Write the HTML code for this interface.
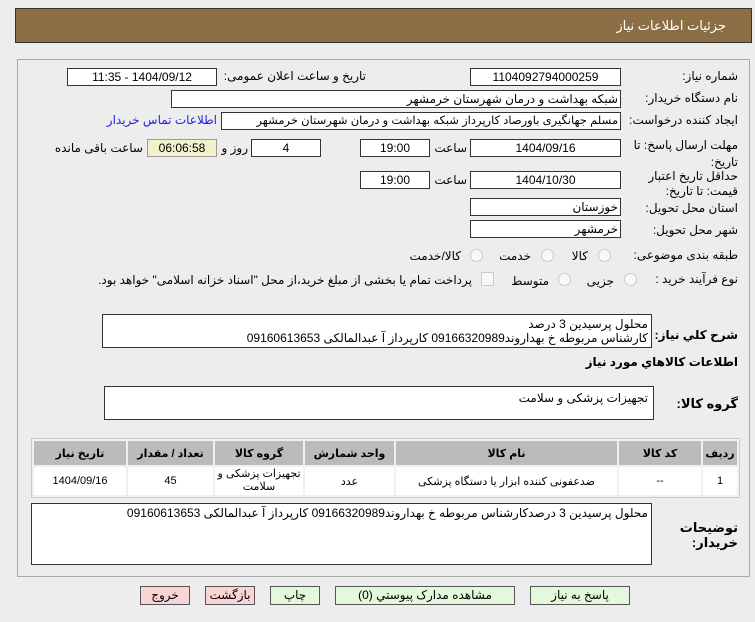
<!DOCTYPE html>
<html><head><meta charset="utf-8"><style>
body{margin:0;width:755px;height:622px;background:#ededed;font-family:"Liberation Sans","DejaVu Sans",sans-serif;font-size:12px;color:#000;position:relative;overflow:hidden;direction:rtl}
.a{position:absolute}
.hdr{left:15px;top:8px;width:737px;height:35px;background:#8b6e45;border:1px solid #333;box-sizing:border-box}
.hdr span{position:absolute;right:25px;top:9px;color:#fff;font-size:13px}
.panel{left:17px;top:59px;width:733px;height:518px;border:1px solid #aaa;box-sizing:border-box;background:#ededed}
.box{position:absolute;background:#fff;border:1px solid #333;box-sizing:border-box;height:18px;text-align:center;font-size:12px;line-height:16px;white-space:nowrap;overflow:hidden}
.l{position:absolute;white-space:nowrap;font-size:12px}
.r{text-align:right;padding-right:2px}
.rad{position:absolute;width:11px;height:11px;border:1px solid #ccc;border-radius:50%;background:#f8f8f8}
.btn{position:absolute;top:586px;height:19px;border:1px solid #555;box-sizing:border-box;text-align:center;font-size:12px;line-height:17px}
.g{background:#e4f8dc}.p{background:#f8d4d4}
table{border-collapse:separate;border-spacing:2px;background:#f0f0f0}
td{font-size:11px;text-align:center}
th{background:#bbb;font-size:11px;font-weight:bold;height:22px}
</style></head><body>
<div class="a hdr"><span>جزئیات اطلاعات نیاز</span></div>
<div class="a panel"></div>

<div class="l" style="right:17px;top:69px">شماره نیاز:</div>
<div class="box" style="left:470px;top:68px;width:151px">1104092794000259</div>
<div class="l" style="right:389px;top:69px">تاریخ و ساعت اعلان عمومی:</div>
<div class="box" style="left:67px;top:68px;width:150px">1404/09/12 - 11:35</div>

<div class="l" style="right:17px;top:91px">نام دستگاه خریدار:</div>
<div class="box r" style="left:171px;top:90px;width:450px">شبکه بهداشت و درمان شهرستان خرمشهر</div>

<div class="l" style="right:17px;top:113px">ایجاد کننده درخواست:</div>
<div class="box r" style="left:221px;top:112px;width:400px;font-size:11.5px">مسلم جهانگیری باورصاد کارپرداز شبکه بهداشت و درمان شهرستان خرمشهر</div>
<div class="l" style="right:538px;top:113px;color:#2222dd">اطلاعات تماس خریدار</div>

<div class="l" style="right:17px;top:137px;line-height:17px">مهلت ارسال پاسخ: تا<br>تاریخ:</div>
<div class="box" style="left:470px;top:139px;width:151px">1404/09/16</div>
<div class="l" style="right:288px;top:141px">ساعت</div>
<div class="box" style="left:360px;top:139px;width:70px">19:00</div>
<div class="box" style="left:251px;top:139px;width:70px">4</div>
<div class="l" style="right:507px;top:141px">روز و</div>
<div class="box" style="left:147px;top:139px;width:70px;background:#f3f0cc;border-color:#999">06:06:58</div>
<div class="l" style="right:612px;top:141px">ساعت باقی مانده</div>

<div class="l" style="right:17px;top:169px;line-height:15px">حداقل تاریخ اعتبار<br>قیمت: تا تاریخ:</div>
<div class="box" style="left:470px;top:171px;width:151px">1404/10/30</div>
<div class="l" style="right:288px;top:173px">ساعت</div>
<div class="box" style="left:360px;top:171px;width:70px">19:00</div>

<div class="l" style="right:17px;top:201px">استان محل تحویل:</div>
<div class="box r" style="left:470px;top:198px;width:151px">خوزستان</div>
<div class="l" style="right:17px;top:223px">شهر محل تحویل:</div>
<div class="box r" style="left:470px;top:220px;width:151px">خرمشهر</div>

<div class="l" style="right:17px;top:248px">طبقه بندی موضوعی:</div>
<div class="rad" style="left:598px;top:249px"></div><div class="l" style="right:167px;top:249px">کالا</div>
<div class="rad" style="left:541px;top:249px"></div><div class="l" style="right:224px;top:249px">خدمت</div>
<div class="rad" style="left:470px;top:249px"></div><div class="l" style="right:294px;top:249px">کالا/خدمت</div>

<div class="l" style="right:17px;top:272px">نوع فرآیند خرید :</div>
<div class="rad" style="left:624px;top:273px"></div><div class="l" style="right:141px;top:274px">جزیی</div>
<div class="rad" style="left:558px;top:273px"></div><div class="l" style="right:206px;top:274px">متوسط</div>
<div class="a" style="left:481px;top:272px;width:11px;height:12px;border:1px solid #ccc;background:#f8f8f8"></div>
<div class="l" style="right:283px;top:273px">پرداخت تمام یا بخشی از مبلغ خرید،از محل "اسناد خزانه اسلامی" خواهد بود.</div>

<div class="l" style="right:17px;top:328px;font-weight:bold">شرح کلي نياز:</div>
<div class="a" style="left:102px;top:314px;width:550px;height:34px;background:#fff;border:1px solid #333;box-sizing:border-box;font-size:12px;line-height:14px;padding:2px 3px;text-align:right">محلول پرسیدین 3 درصد<br>کارشناس مربوطه خ بهداروند09166320989 کارپرداز آ عبدالمالکی 09160613653</div>
<div class="l" style="right:17px;top:355px;font-weight:bold;font-size:12px">اطلاعات کالاهاي مورد نياز</div>

<div class="l" style="right:17px;top:396px;font-weight:bold;font-size:13px">گروه کالا:</div>
<div class="a" style="left:104px;top:386px;width:550px;height:34px;background:#fff;border:1px solid #333;box-sizing:border-box;font-size:12px;padding:4px 5px;text-align:right">تجهیزات پزشکی و سلامت</div>

<div class="a" style="left:31px;top:438px;width:707px;border:1px solid #ccc">
<table style="width:707px">
<tr><th style="width:32px">ردیف</th><th style="width:80px">کد کالا</th><th>نام کالا</th><th style="width:87px">واحد شمارش</th><th style="width:86px">گروه کالا</th><th style="width:83px">تعداد / مقدار</th><th style="width:90px">تاریخ نیاز</th></tr>
<tr style="background:#fff;height:28px"><td>1</td><td>--</td><td>ضدعفونی کننده ابزار یا دستگاه پزشکی</td><td>عدد</td><td style="line-height:13px">تجهیزات پزشکی و سلامت</td><td>45</td><td>1404/09/16</td></tr>
</table></div>

<div class="l" style="right:17px;top:520px;font-weight:bold;font-size:13px;line-height:15px">توضیحات<br>خریدار:</div>
<div class="a" style="left:31px;top:503px;width:621px;height:62px;background:#fff;border:1px solid #333;box-sizing:border-box;font-size:12px;padding:2px 3px;text-align:right">محلول پرسیدین 3 درصدکارشناس مربوطه خ بهداروند09166320989 کارپرداز آ عبدالمالکی 09160613653</div>

<div class="btn g" style="left:530px;width:100px">پاسخ به نیاز</div>
<div class="btn g" style="left:335px;width:180px">مشاهده مدارک پیوستي (0)</div>
<div class="btn g" style="left:270px;width:50px">چاپ</div>
<div class="btn p" style="left:205px;width:50px">بازگشت</div>
<div class="btn p" style="left:140px;width:50px">خروج</div>
</body></html>
